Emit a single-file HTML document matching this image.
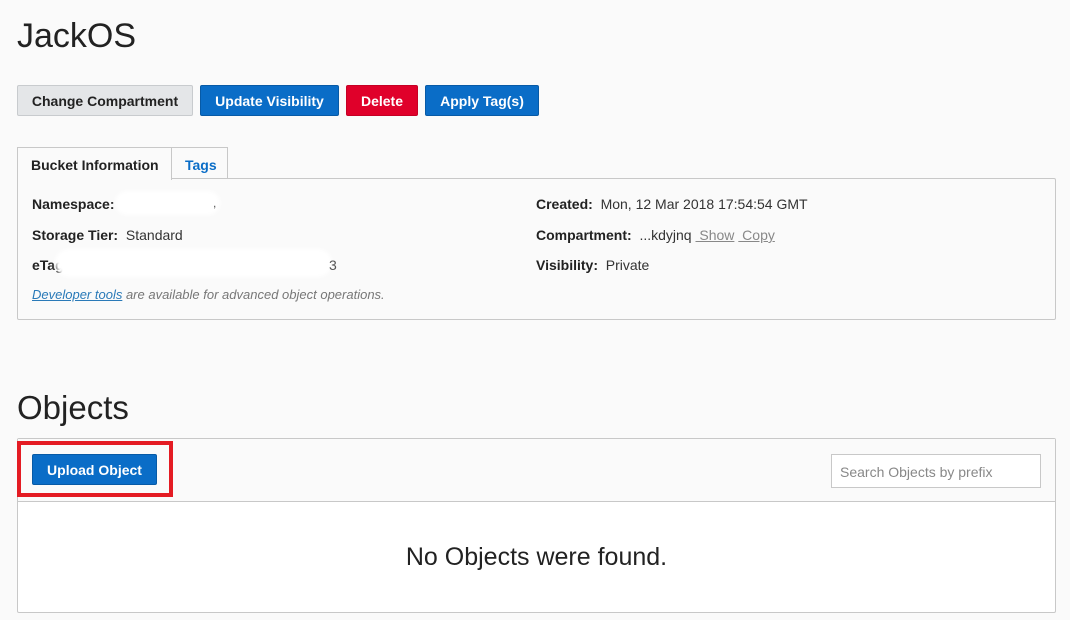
<!DOCTYPE html>
<html><head><meta charset="utf-8"><style>
*{box-sizing:border-box;margin:0;padding:0}
body{width:1070px;height:620px;background:#fafafa;font-family:"Liberation Sans",Arial,sans-serif;color:#222;position:relative;overflow:hidden}
.a{position:absolute}
.btn{position:absolute;height:31px;border-radius:2px;font-weight:bold;font-size:14px;display:flex;align-items:center;justify-content:center;color:#fff;top:85px}
.blue{background:#0a6dc7;border:1px solid #075aa6}
.lbl{font-weight:bold;font-size:14px;color:#222}
.val{font-size:14px;color:#333}
.row{position:absolute;font-size:14px;white-space:nowrap}
</style></head><body>
<div class="a" style="left:17px;top:17px;font-size:34px;color:#222">JackOS</div>
<div class="btn" style="left:17px;width:176px;background:#e4e6e8;border:1px solid #c8cbce;color:#222">Change Compartment</div>
<div class="btn blue" style="left:200px;width:139px">Update Visibility</div>
<div class="btn" style="left:346px;width:72px;background:#e0002a;border:1px solid #c50024">Delete</div>
<div class="btn blue" style="left:425px;width:114px">Apply Tag(s)</div>

<div class="a" style="left:17px;top:178px;width:1039px;height:142px;border:1px solid #c8c8c8;border-radius:2px;background:#fafafa"></div>
<div class="a" style="left:17px;top:147px;width:155px;height:33px;border:1px solid #c8c8c8;border-bottom:none;background:#fafafa;font-weight:bold;font-size:14px;padding:9px 0 0 13px">Bucket Information</div>
<div class="a" style="left:171px;top:147px;width:57px;height:31px;border:1px solid #c8c8c8;border-bottom:none;background:#fafafa;font-weight:bold;font-size:14px;color:#0a6dc7;padding:9px 0 0 13px">Tags</div>

<div class="row" style="left:32px;top:196px"><span class="lbl">Namespace:</span></div>
<div class="a" style="left:115px;top:191px;width:105px;height:24px;background:#fff;border-radius:12px;filter:blur(2px)"></div>
<div class="row" style="left:213px;top:196px;color:#555;font-size:12px">,</div>
<div class="row" style="left:32px;top:227px"><span class="lbl">Storage Tier:</span> <span class="val">&nbsp;Standard</span></div>
<div class="row" style="left:32px;top:257px"><span class="lbl">eTag</span></div>
<div class="a" style="left:55px;top:249px;width:277px;height:28px;background:#fff;border-radius:14px;filter:blur(2px)"></div>
<div class="row" style="left:329px;top:257px;color:#555">3</div>
<div class="row" style="left:32px;top:287px;font-size:13px;font-style:italic;color:#777"><span style="color:#2a7ab8;text-decoration:underline">Developer tools</span> are available for advanced object operations.</div>

<div class="row" style="left:536px;top:196px"><span class="lbl">Created:</span> <span class="val">&nbsp;Mon, 12 Mar 2018 17:54:54 GMT</span></div>
<div class="row" style="left:536px;top:227px"><span class="lbl">Compartment:</span> <span class="val">&nbsp;...kdyjnq</span> <span style="color:#888;text-decoration:underline">&nbsp;Show</span> <span style="color:#888;text-decoration:underline">&nbsp;Copy</span></div>
<div class="row" style="left:536px;top:257px"><span class="lbl">Visibility:</span> <span class="val">&nbsp;Private</span></div>

<div class="a" style="left:17px;top:389px;font-size:33px;color:#222">Objects</div>
<div class="a" style="left:17px;top:438px;width:1039px;height:175px;border:1px solid #c8c8c8;border-radius:2px;background:#fff"></div>
<div class="a" style="left:18px;top:439px;width:1037px;height:63px;background:#fafafa;border-bottom:1px solid #c8c8c8"></div>
<div class="a" style="left:17px;top:441px;width:156px;height:56px;border:4px solid #e41b23"></div>
<div class="btn blue" style="left:32px;top:454px;width:125px;height:31px">Upload Object</div>
<div class="a" style="left:831px;top:454px;width:210px;height:34px;border:1px solid #c8c8c8;background:#fff;font-size:14px;color:#888;padding:9px 0 0 8px">Search Objects by prefix</div>
<div class="a" style="left:18px;top:543px;width:1037px;text-align:center;font-size:25px;color:#222">No Objects were found.</div>
</body></html>
